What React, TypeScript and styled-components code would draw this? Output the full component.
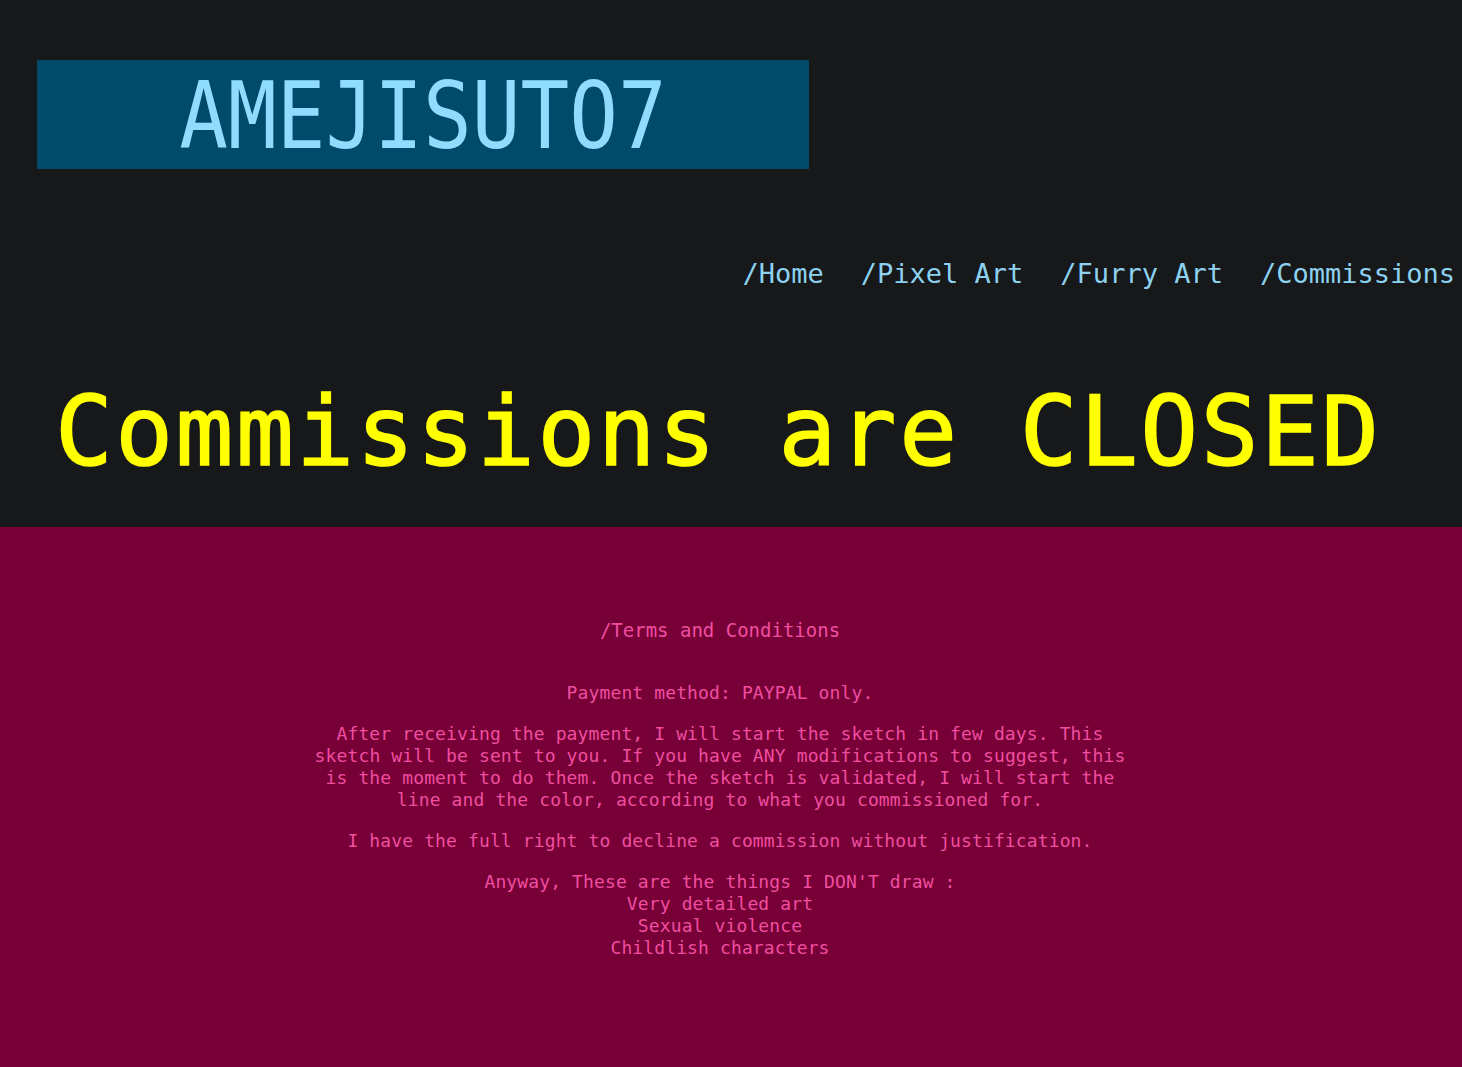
import React from "react";
import styled, { createGlobalStyle } from "styled-components";

const GlobalStyle = createGlobalStyle`
  html, body {
    margin: 0;
    padding: 0;
    background: #770037;
  }
  body {
    font-family: "DejaVu Sans Mono", "Liberation Mono", monospace;
  }
`;

const navLinks = ["/Home", "/Pixel Art", "/Furry Art", "/Commissions"];

const dontDraw = [
  "Anyway, These are the things I DON'T draw :",
  "Very detailed art",
  "Sexual violence",
  "Childlish characters",
];

const App: React.FC = () => {
  return (
    <>
      <GlobalStyle />
      <Header>
        <LogoBox>
          <LogoText>AMEJISUTO7</LogoText>
        </LogoBox>
        <Nav>
          {navLinks.map((link) => (
            <NavLink key={link} href="#">
              {link}
            </NavLink>
          ))}
        </Nav>
        <Headline>Commissions are CLOSED</Headline>
      </Header>
      <Terms>
        <TermsTitle>/Terms and Conditions</TermsTitle>
        <Paragraph>Payment method: PAYPAL only.</Paragraph>
        <Paragraph>
          After receiving the payment, I will start the sketch in few days. This
          sketch will be sent to you. If you have ANY modifications to suggest,
          this is the moment to do them. Once the sketch is validated, I will
          start the line and the color, according to what you commissioned for.
        </Paragraph>
        <Paragraph>
          I have the full right to decline a commission without justification.
        </Paragraph>
        <Paragraph>
          {dontDraw.map((line, i) => (
            <React.Fragment key={line}>
              {i > 0 && <br />}
              {line}
            </React.Fragment>
          ))}
        </Paragraph>
      </Terms>
    </>
  );
};

export default App;

const Header = styled.header`
  background: #17181a;
  padding: 60px 7px 40px 0;
  display: flex;
  flex-direction: column;
`;

const LogoBox = styled.div`
  margin-left: 37px;
  width: 772px;
  height: 109px;
  background: #014a69;
  display: flex;
  align-items: center;
  justify-content: center;
`;

const LogoText = styled.span`
  display: inline-block;
  font-family: "DejaVu Sans Mono", monospace;
  font-size: 92px;
  line-height: 1;
  color: #8fdcff;
  transform: scaleX(0.88);
  margin-top: 4px;
`;

const Nav = styled.nav`
  margin-top: 89px;
  display: flex;
  justify-content: flex-end;
  gap: 37px;
`;

const NavLink = styled.a`
  font-size: 27px;
  line-height: 32px;
  color: #8cd2f0;
  text-decoration: none;
`;

const Headline = styled.h1`
  margin: 87px 0 0 55px;
  font-size: 96px;
  font-weight: normal;
  line-height: 110px;
  letter-spacing: 2.5px;
  color: #ffff00;
  -webkit-text-stroke: 1.5px #ffff00;
  white-space: nowrap;
`;

const Terms = styled.section`
  box-sizing: border-box;
  background: #770037;
  min-height: 540px;
  padding: 91px 22px 40px 0;
  display: flex;
  flex-direction: column;
  align-items: center;
  color: #f04ea0;
  text-align: center;
`;

const TermsTitle = styled.h2`
  margin: 0 0 40px;
  font-size: 19px;
  font-weight: normal;
  line-height: 24px;
`;

const Paragraph = styled.p`
  margin: 0 0 19px;
  max-width: 830px;
  font-size: 18px;
  line-height: 22px;
  letter-spacing: 0.12px;
`;
